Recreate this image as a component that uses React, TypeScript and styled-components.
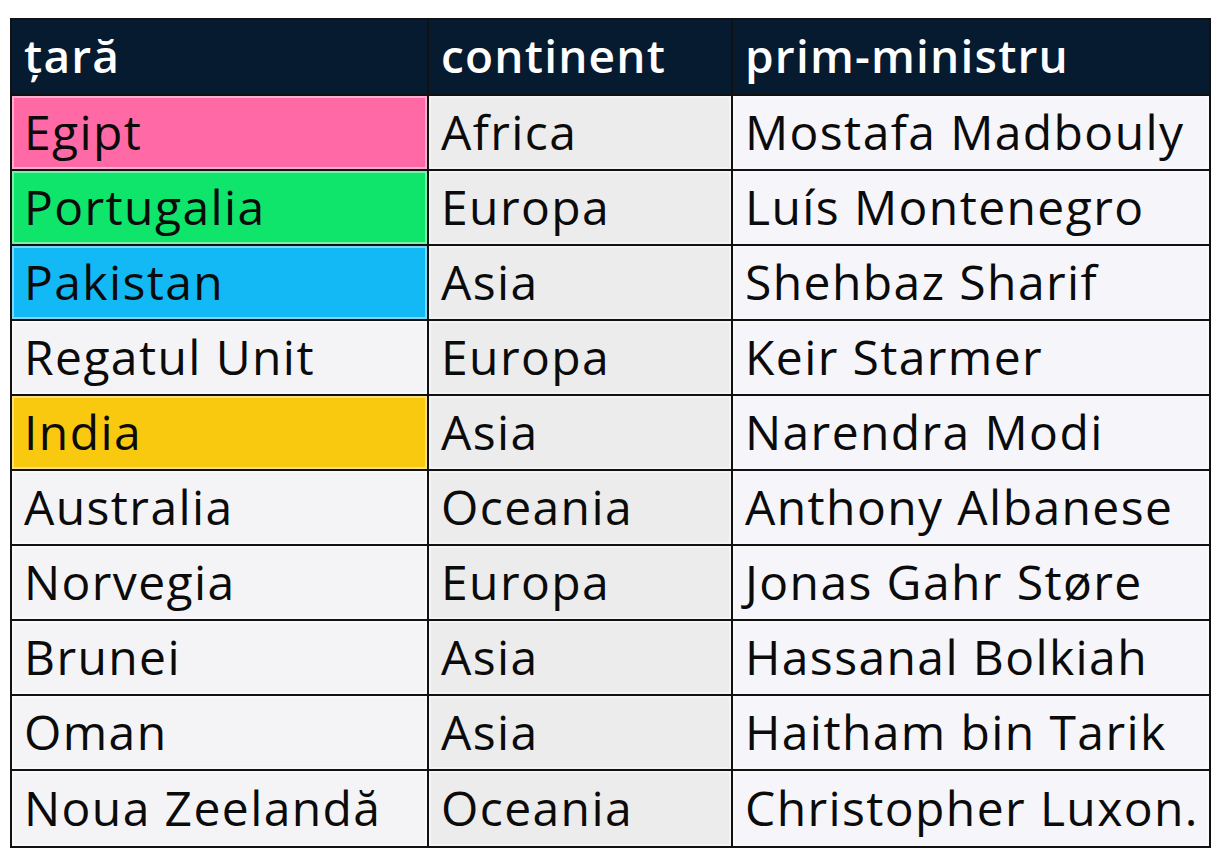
import styled, { createGlobalStyle } from "styled-components";

const GlobalStyle = createGlobalStyle`
  html, body {
    margin: 0;
    padding: 0;
    background: #ffffff;
  }
  body {
    font-family: "Open Sans", "Liberation Sans", sans-serif;
  }
`;

const Page = styled.div`
  padding: 18px 16px 0 10px;
`;

const Table = styled.table`
  width: 1199px;
  border-collapse: collapse;
  border: 2px solid #111;
  table-layout: fixed;
`;

const HeadCell = styled.th<{ $width: number }>`
  box-sizing: border-box;
  width: ${(p) => p.$width}px;
  height: 76px;
  padding: 0 8px 2px 12px;
  background: #061a30;
  color: #ffffff;
  font-size: 46px;
  line-height: 1.2;
  font-weight: 600;
  text-align: left;
  border: 2px solid #111;
  letter-spacing: 1.2px;
  white-space: nowrap;
  overflow: hidden;
`;

const Cell = styled.td<{ $bg: string; $last?: boolean }>`
  box-sizing: border-box;
  height: ${(p) => (p.$last ? 77 : 75)}px;
  padding: 0 4px 2px 12px;
  background: ${(p) => p.$bg};
  color: #0b0b0b;
  font-size: 48px;
  line-height: 1.2;
  font-weight: 400;
  border: 2px solid #111;
  white-space: nowrap;
  overflow: hidden;
  letter-spacing: 1.4px;
  box-shadow: inset 0 0 0 2px rgba(255, 255, 255, 0.45);
`;

type Row = {
  country: string;
  continent: string;
  pm: string;
  color?: string;
};

const rows: Row[] = [
  { country: "Egipt", continent: "Africa", pm: "Mostafa Madbouly", color: "#ff6aa6" },
  { country: "Portugalia", continent: "Europa", pm: "Luís Montenegro", color: "#0fe46b" },
  { country: "Pakistan", continent: "Asia", pm: "Shehbaz Sharif", color: "#12b9f4" },
  { country: "Regatul Unit", continent: "Europa", pm: "Keir Starmer" },
  { country: "India", continent: "Asia", pm: "Narendra Modi", color: "#f9c90f" },
  { country: "Australia", continent: "Oceania", pm: "Anthony Albanese" },
  { country: "Norvegia", continent: "Europa", pm: "Jonas Gahr Støre" },
  { country: "Brunei", continent: "Asia", pm: "Hassanal Bolkiah" },
  { country: "Oman", continent: "Asia", pm: "Haitham bin Tarik" },
  { country: "Noua Zeelandă", continent: "Oceania", pm: "Christopher Luxon." },
];

export default function App() {
  return (
    <Page>
      <GlobalStyle />
      <Table>
        <thead>
          <tr>
            <HeadCell $width={417}>țară</HeadCell>
            <HeadCell $width={304}>continent</HeadCell>
            <HeadCell $width={478}>prim-ministru</HeadCell>
          </tr>
        </thead>
        <tbody>
          {rows.map((r, i) => {
            const last = i === rows.length - 1;
            return (
              <tr key={r.country}>
                <Cell $last={last} $bg={r.color ?? "#f4f4f7"}>{r.country}</Cell>
                <Cell $last={last} $bg="#ececec">{r.continent}</Cell>
                <Cell $last={last} $bg="#f5f5fa">{r.pm}</Cell>
              </tr>
            );
          })}
        </tbody>
      </Table>
    </Page>
  );
}
